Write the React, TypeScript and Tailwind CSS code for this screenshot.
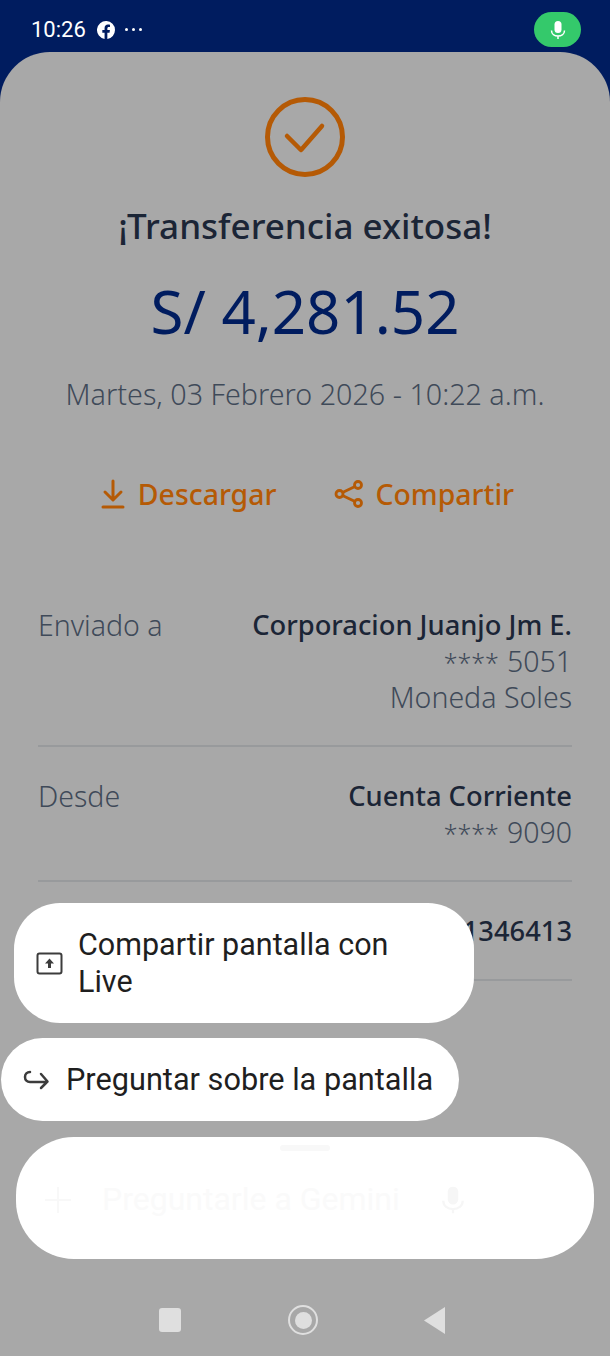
const rows = [
  { label: "Enviado a", title: "Corporacion Juanjo Jm E.", lines: ["5051", "Moneda Soles"] },
  { label: "Desde", title: "Cuenta Corriente", lines: ["9090"] },
  { label: "", title: "1346413", lines: [] },
];

// Filled mic used in the status pill and in the input
const MicGlyph = ({ color, className }: { color: string; className?: string }) => (
  <svg className={className} width="16" height="18" viewBox="0 0 16 18" fill="none">
    <rect x="4.500" y="0" width="7" height="12" rx="3.500" fill={color} />
    <path d="M1.500 9.500c0 3.500 3 5.500 6.500 5.500s6.500-2 6.500-5.500M8 15v3" stroke={color} strokeWidth="1.500" />
  </svg>
);

const App = () => {
  return (
    <div className="relative w-[610px] h-[1356px] overflow-hidden bg-[#001c5f] font-['Noto_Sans',sans-serif]">
      {/* Status bar */}
      <div className="h-[52px] flex items-center pl-[31px] pr-[29px] pt-[7px] text-white">
        <span className="text-[22px] leading-none font-['Roboto',sans-serif]">10:26</span>
        <svg className="ml-[11px]" width="18" height="18" viewBox="0 0 24 24" fill="white">
          <path d="M24 12a12 12 0 1 0-13.900 11.900v-8.400H7.100V12h3V9.400c0-3 1.800-4.700 4.500-4.700 1.300 0 2.700.2 2.700.2v3h-1.500c-1.500 0-2 .9-2 1.900V12h3.400l-.5 3.500h-2.900v8.400A12 12 0 0 0 24 12z" />
        </svg>
        <div className="ml-[10px] flex gap-[4px]">
          <span className="w-[3px] h-[3px] rounded-full bg-white" />
          <span className="w-[3px] h-[3px] rounded-full bg-white" />
          <span className="w-[3px] h-[3px] rounded-full bg-white" />
        </div>
        <div className="ml-auto w-[47px] h-[35px] rounded-[18px] bg-[#34c96b] flex items-center justify-center">
          <MicGlyph color="white" />
        </div>
      </div>

      {/* Receipt sheet */}
      <div className="h-[1304px] bg-[#a8a8a8] rounded-t-[50px] pt-[45px] flex flex-col items-center">
        <svg width="80" height="80" viewBox="0 0 80 80" fill="none" stroke="#b55a05">
          <circle cx="40" cy="40" r="37.500" strokeWidth="5" />
          <path d="M22 39l14 14 21-24" strokeWidth="4.500" strokeLinecap="round" strokeLinejoin="round" />
        </svg>
        <h1 className="mt-[28px] text-[35px] leading-[42px] font-medium text-[#1b2536] whitespace-nowrap">¡Transferencia exitosa!</h1>
        <div className="mt-[29px] text-[60px] leading-[70px] text-[#001c5f]">S/ 4,281.52</div>
        <div className="mt-[31px] text-[28.700px] leading-[34px] text-[#3f4a59] font-light whitespace-nowrap">Martes, 03 Febrero 2026 - 10:22 a.m.</div>

        {/* Actions */}
        <div className="mt-[65px] ml-[5px] flex items-center gap-[58px] text-[#b55a05] text-[28.400px] leading-[36px] font-medium">
          <div className="flex items-center gap-[13px]">
            <svg width="24" height="30" viewBox="0 0 24 30" fill="none" stroke="currentColor" strokeWidth="3" strokeLinecap="round" strokeLinejoin="round">
              <path d="M12 2v18M4 13l8 8 8-8M2 28h20" />
            </svg>
            <span>Descargar</span>
          </div>
          <div className="flex items-center gap-[11px]">
            <svg width="30" height="30" viewBox="0 0 30 30" fill="none" stroke="currentColor" strokeWidth="2.800">
              <circle cx="24" cy="6" r="3.500" />
              <circle cx="5.500" cy="15" r="3.500" />
              <circle cx="24" cy="24" r="3.500" />
              <path d="M8.500 13.500l12.500-6M8.500 16.500l12.500 6" />
            </svg>
            <span>Compartir</span>
          </div>
        </div>

        {/* Detail rows */}
        <div className="mt-[95px] w-full px-[38px] flex flex-col">
          {rows.map((r) => (
            <div key={r.title} className="flex justify-between border-b-2 border-[#989a9c] pb-[30px] mb-[31px] last:pb-[30px]">
              <span className="text-[28.500px] leading-[36px] text-[#3f4a59] font-light">{r.label}</span>
              <div className="text-right leading-[36px]">
                <div className="text-[27.300px] font-medium text-[#1b2536]">{r.title}</div>
                {r.lines.map((l) => (
                  <div key={l} className="text-[28.500px] text-[#3f4a59] font-light">
                    {/^\d+$/.test(l) && <span className="text-[25px] leading-none mr-[8px]">****</span>}
                    {l}
                  </div>
                ))}
              </div>
            </div>
          ))}
        </div>
      </div>

      {/* Gemini suggestions */}
      <div className="absolute left-[14px] top-[903px] w-[460px] h-[120px] rounded-[46px] bg-white flex items-center pl-[22px] gap-[15px] text-[#1f1f1f] font-['Roboto',sans-serif]">
        <svg className="shrink-0" width="27" height="23" viewBox="0 0 27 23" fill="none" stroke="#3c3c3c" strokeWidth="2">
          <rect x="1.500" y="1.500" width="24" height="20" rx="2" />
          <path d="M13.500 6.500l4.500 5h-3v4.500h-3v-4.500h-3z" fill="#3c3c3c" stroke="none" />
        </svg>
        <span className="w-[330px] text-[30.500px] leading-[37px]">Compartir pantalla con Live</span>
      </div>
      <div className="absolute left-[1px] top-[1038px] w-[458px] h-[83px] rounded-[42px] bg-white flex items-center pl-[21px] gap-[16px] text-[#1f1f1f] font-['Roboto',sans-serif]">
        <svg className="shrink-0" width="28" height="24" viewBox="0 0 28 24" fill="none" stroke="#3c3c3c" strokeWidth="2.500" strokeLinecap="round" strokeLinejoin="round">
          <path d="M8 4C5 4 3 6 3 9s2 5 5 5h17M19 6l6.500 7.500L19 20" />
        </svg>
        <span className="text-[30.700px] leading-[37px] whitespace-nowrap">Preguntar sobre la pantalla</span>
      </div>

      {/* Gemini input, nearly washed out */}
      <div className="absolute left-[16px] top-[1137px] w-[578px] h-[122px] rounded-[58px] bg-white">
        <div className="mx-auto mt-[8px] w-[50px] h-[6px] rounded-full bg-[#f8f8f8]" />
        <div className="mt-[30px] pl-[27px] flex items-center text-[#fafafa] font-['Roboto',sans-serif]">
          <svg width="30" height="30" viewBox="0 0 30 30" stroke="#f8f8f8" strokeWidth="2">
            <path d="M15 2v26M2 15h26" />
          </svg>
          <span className="ml-[29px] text-[32px] leading-[37px] whitespace-nowrap">Preguntarle a Gemini</span>
          <MicGlyph className="ml-[45px] scale-150" color="#f6f6f6" />
        </div>
      </div>

      {/* Android nav bar */}
      <div className="absolute left-0 right-0 top-[1304px] h-[32px] flex items-center">
        <div className="ml-[159px] w-[22px] h-[24px] rounded-[3px] bg-[#dfdfdf]" />
        <div className="ml-[107px] w-[30px] h-[30px] rounded-full border-[2px] border-[#dfdfdf] flex items-center justify-center">
          <div className="w-[17px] h-[17px] rounded-full bg-[#dfdfdf]" />
        </div>
        <svg className="ml-[106px]" width="22" height="27" viewBox="0 0 22 27" fill="#dfdfdf">
          <path d="M21 0v27L0 13.500z" />
        </svg>
      </div>
    </div>
  );
};

export default App;
